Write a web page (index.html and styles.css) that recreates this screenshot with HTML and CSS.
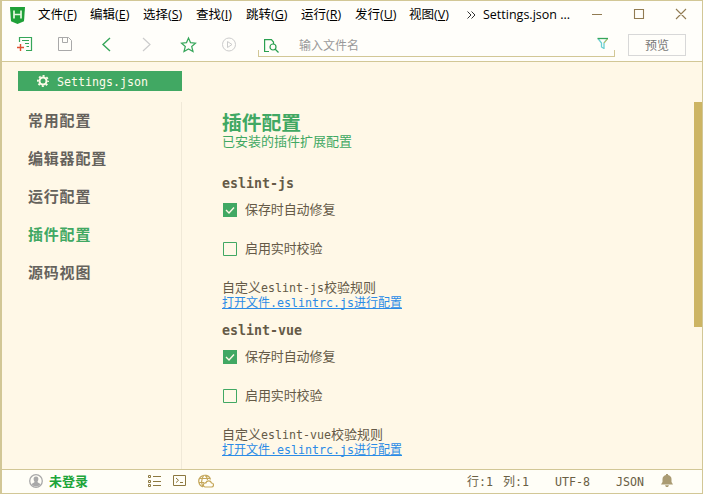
FILE: index.html
```html
<!DOCTYPE html>
<html lang="zh-CN">
<head>
<meta charset="utf-8">
<title>Settings.json</title>
<link rel="stylesheet" href="styles.css">
</head>
<body>
<div class="window">
  <header class="header">
    <div class="titlebar">
      <svg class="logo" width="15" height="17" viewBox="0 0 15 17"><path d="M0 0h15l-1 14.3L7.500 17 1 14.300z" fill="#1fa038"/><path d="M4 3.500v8M11 3.500v8M4 7.500h7" fill="none" stroke="#e6f8df" stroke-width="1.700"/></svg>
      <nav class="menu">
        <span>文件(<u>F</u>)</span><span>编辑(<u>E</u>)</span><span>选择(<u>S</u>)</span><span>查找(<u>I</u>)</span><span>跳转(<u>G</u>)</span><span>运行(<u>R</u>)</span><span>发行(<u>U</u>)</span><span>视图(<u>V</u>)</span>
      </nav>
      <svg class="more" width="9" height="8" viewBox="0 0 9 8"><path d="M.5.500 4 4 .5 7.500M4.500.500 8 4 4.500 7.500" fill="none" stroke="#333"/></svg>
      <span class="title">Settings.json ...</span>
      <svg class="controls" width="96" height="12" viewBox="0 0 96 12"><path d="M0 6.500h10M42.500 1.500h9v9h-9zM84 1l10 10M94 1 84 11" fill="none" stroke="#917b52" stroke-width="1.100"/></svg>
    </div>
    <div class="toolbar">
      <svg class="tools" width="222" height="18" viewBox="0 0 222 18" fill="none">
        <path d="M2.500 6V1.500h12v13H9M5 4.500h7M8 7.500h4M9.500 10.500h2.500" stroke="#36a65a" stroke-width="1.200"/>
        <path d="M0 11.500h7M3.500 8v7" stroke="#e05030" stroke-width="1.400"/>
        <path d="M41.500 1.500h10l3 3v10h-13zM45.500 1.500v5h5v-5" stroke="#a9a9a9"/>
        <path d="m93 2-7 6.500 7 6.500" stroke="#36a65a" stroke-width="1.400"/>
        <path d="m126 2 7 6.500-7 6.500" stroke="#ccc" stroke-width="1.200"/>
        <path d="m171.500 2 2 4.600 5 .5-3.800 3.400 1.300 5-4.500-2.600-4.500 2.600 1.300-5-3.800-3.400 5-.5z" stroke="#36a65a" stroke-width="1.200"/>
        <circle cx="212" cy="8.500" r="6.500" stroke="#ccc"/><path d="m210.500 5.500 4.500 3-4.500 3z" stroke="#ccc"/>
      </svg>
      <div class="search">
        <svg class="search-icon" width="15" height="14" viewBox="0 0 15 14" fill="none" stroke="#2aa050" stroke-width="1.200"><path d="M5 12.500H.6V.6h6.800L9.500 3v2"/><circle cx="9" cy="8" r="3"/><path d="m11 10 3.500 3.500"/></svg>
        <span class="placeholder">输入文件名</span>
        <svg class="filter" width="12" height="12" viewBox="0 0 12 12" fill="none"><path d="M1 1.500 4.500 6v4L7 11.500V6l3.500-4.500" stroke="#69cfd2" stroke-width="1.300"/><path d="M.5 1.500h10.500" stroke="#36a65a" stroke-width="1.300"/><path d="m7 6 3.500-4" stroke="#d1bd4e"/></svg>
      </div>
      <div class="preview">预览</div>
    </div>
  </header>
  <main class="body">
    <aside class="sidebar">
      <div class="tab">
        <svg width="12" height="12" viewBox="0 0 12 12" fill="none" stroke="#fffbea"><circle cx="6" cy="6" r="3.500" stroke-width="2"/><circle cx="6" cy="6" r="5.100" stroke-width="1.800" stroke-dasharray="2 2.005" stroke-dashoffset="1"/></svg>
        <span class="mono">Settings.json</span>
      </div>
      <ul class="nav">
        <li>常用配置</li><li>编辑器配置</li><li>运行配置</li><li class="active">插件配置</li><li>源码视图</li>
      </ul>
    </aside>
    <section class="content">
      <h1>插件配置</h1>
      <p class="subtitle">已安装的插件扩展配置</p>
      <div class="group">
        <h2>eslint-js</h2>
        <div class="option"><svg class="box" width="14" height="14" viewBox="0 0 14 14"><path d="M0 0h14v14H0z" fill="#41a863"/><path d="m3 7 3 3 5-5.500" fill="none" stroke="#fff8e7" stroke-width="1.400"/></svg><span>保存时自动修复</span></div>
        <div class="option"><svg class="box" width="14" height="14" viewBox="0 0 14 14"><path d="M.5.500h13v13H.5z" fill="none" stroke="#41a863"/></svg><span>启用实时校验</span></div>
        <p class="rule">自定义<span class="mono">eslint-js</span>校验规则</p>
        <a class="link">打开文件<span class="mono">.eslintrc.js</span>进行配置</a>
      </div>
      <div class="group">
        <h2>eslint-vue</h2>
        <div class="option"><svg class="box" width="14" height="14" viewBox="0 0 14 14"><path d="M0 0h14v14H0z" fill="#41a863"/><path d="m3 7 3 3 5-5.500" fill="none" stroke="#fff8e7" stroke-width="1.400"/></svg><span>保存时自动修复</span></div>
        <div class="option"><svg class="box" width="14" height="14" viewBox="0 0 14 14"><path d="M.5.500h13v13H.5z" fill="none" stroke="#41a863"/></svg><span>启用实时校验</span></div>
        <p class="rule">自定义<span class="mono">eslint-vue</span>校验规则</p>
        <a class="link">打开文件<span class="mono">.eslintrc.js</span>进行配置</a>
      </div>
    </section>
    <div class="scrollbar"></div>
  </main>
  <footer class="status">
    <svg class="user" width="14" height="14" viewBox="0 0 14 14"><circle cx="7" cy="7" r="6.300" fill="none" stroke="#a9a9a9" stroke-width="1.300"/><path d="M7 2.500c-2 0-2.700 1.300-2.300 3.200.2 1.200.8 1.500.8 2.300 0 1-2.500 1-2.800 2.500C5 13 9 13 11.300 10.500 11 9 8.500 9 8.500 8c0-.8.6-1.100.8-2.300C9.700 3.800 9 2.500 7 2.500" fill="#a9a9a9"/></svg>
    <span class="login">未登录</span>
    <svg class="status-icons" width="66" height="14" viewBox="0 0 66 14" fill="none" stroke="#8c7840">
      <path d="M.5 1.500h2v2h-2zM.5 6.500h2v2h-2zM.5 10.500h2v2h-2zM5 2.500h8M5 7.500h8M5 11.500h8M25.500 1.500h12v10h-12zM28 4l2.500 2.300L28 8.600M32 8.500h3"/>
      <path d="M55 13a6 6 0 1 1 7.500-7.500M51 4.500h11M51 8.500h5M56 1c-3 4-3 8-1 12M57 1c2 2 2.500 3.500 2.500 5" stroke="#c5a75a" stroke-width="1.200"/>
      <path d="M57 13h6.500a2 2 0 0 0 0-4 3 3 0 0 0-5.700 0 2 2 0 0 0-.8 4z" fill="#fffef7" stroke="#c5a75a" stroke-width="1.200"/>
    </svg>
    <span class="position">行<span class="mono">:1</span></span>
    <span class="column">列<span class="mono">:1</span></span>
    <span class="encoding mono">UTF-8</span>
    <span class="language mono">JSON</span>
    <svg class="bell" width="12" height="13" viewBox="0 0 12 13" fill="#aa9b72"><path d="M5 0h2v1c2 .4 3.500 2 3.500 4v3l1.500 2.500H0L1.500 8V5c0-2 1.500-3.600 3.500-4zM4 11.300h4L7 13H5z"/></svg>
  </footer>
</div>
</body>
</html>
```
FILE: styles.css
```css
* { box-sizing: border-box; }
body, h1, h2, p, ul { margin: 0; padding: 0; }
body { width: 703px; height: 494px; overflow: hidden; font: 13px/16px "Noto Sans CJK SC", sans-serif; }
svg { display: block; flex: none; }
span { white-space: nowrap; }
.mono { font-family: "DejaVu Sans Mono", "Noto Sans CJK SC", monospace; font-size: 11.63px; }
.window { display: grid; grid-template-rows: 61px 408px 24px; height: 494px; border: 1px solid #d2c796; border-left-width: 2px; border-top: 0; background: #fff8e7; }

.header { background: #fffefa; border-top: 1px solid #d2c796; }
.titlebar { display: flex; align-items: center; height: 28px; }
.logo { margin-left: 8px; }
.menu { display: grid; grid-template-columns: 52px 53px 53px 50px 55px 54px 54px 58px; margin-left: 13px; font: 12.5px/18px "Open Sans", "Noto Sans CJK SC", sans-serif; color: #000; }
.menu u { text-underline-offset: 1px; }
.more { margin-top: -1px; }
.title { margin-left: 7px; width: 109px; font: 12.5px/18px "Open Sans", sans-serif; color: #000; }
.controls { margin-top: -2px; }
.toolbar { display: flex; height: 32px; }
.tools { margin: 7px 0 0 15px; }
.search { display: flex; align-items: flex-start; width: 357px; height: 28px; margin-left: 19px; padding-left: 6px; background: linear-gradient(#d2c796,#d2c796) left bottom/1px 7px no-repeat, linear-gradient(#d2c796,#d2c796) right bottom/1px 7px no-repeat, linear-gradient(#d2c796,#d2c796) bottom/100% 1px no-repeat; }
.search-icon { margin-top: 10px; }
.placeholder { margin: 8px 0 0 20px; font-size: 12px; color: #999; }
.filter { margin: 8px 6px 0 auto; }
.preview { width: 58px; height: 22px; margin: 5px 0 0 13px; border: 1px solid #d8d8d8; color: #777; font-size: 12px; line-height: 20px; text-align: center; }

.body { display: grid; grid-template-columns: 180px 1fr 8px; border-top: 1px solid #d2c796; }
.sidebar { padding-top: 9px; }
.tab { display: flex; align-items: center; width: 164px; height: 20px; margin-left: 16px; padding-left: 19px; gap: 8px; background: #41a863; color: #fffbea; }
.tab .mono { padding-top: 2px; }
.nav { height: 367px; margin-top: 11px; padding-left: 26px; list-style: none; border-right: 1px solid #f0e9d8; font-weight: 700; font-size: 15px; letter-spacing: .8px; color: #65625c; }
.nav li { height: 38px; line-height: 35px; }
.nav .active { color: #41a863; }
.content { padding: 47px 0 0 40px; color: #655a47; }
h1 { height: 25px; font-size: 19.8px; line-height: 25px; color: #41a863; }
.subtitle { height: 15px; line-height: 14px; color: #41a863; }
.group { height: 147px; padding-top: 26px; }
h2 { height: 18px; font: 700 13.3px/18px "DejaVu Sans Mono", monospace; }
.option { display: flex; align-items: center; height: 14px; gap: 8px; margin-top: 10px; }
.option span { margin-top: -2px; letter-spacing: -.1px; }
.option + .option { margin-top: 25px; }
.box { margin-left: 1px; }
.rule { height: 14px; margin-top: 25px; line-height: 12px; }
.link { display: block; width: max-content; height: 14px; line-height: 13px; font-size: 12px; color: #2b8be6; border-bottom: 1px solid #2b8be6; }
.scrollbar { height: 225px; margin-top: 40px; background: #cdb564; }

.status { display: flex; align-items: center; border-top: 1px solid #d2c796; background: #fffef7; color: #6a6044; }
.user { margin-left: 27px; margin-top: -1px; }
.login { margin: -2px 0 0 6px; width: 99px; font-weight: 700; color: #20a53a; }
.status-icons { margin-top: -1px; }
.position { width: 36px; margin-left: 253px; }
.column { width: 52px; }
.position, .column { font-size: 12px; }
.encoding { width: 61px; }
.language { width: 45px; }
.bell { margin-top: -2px; }
```
